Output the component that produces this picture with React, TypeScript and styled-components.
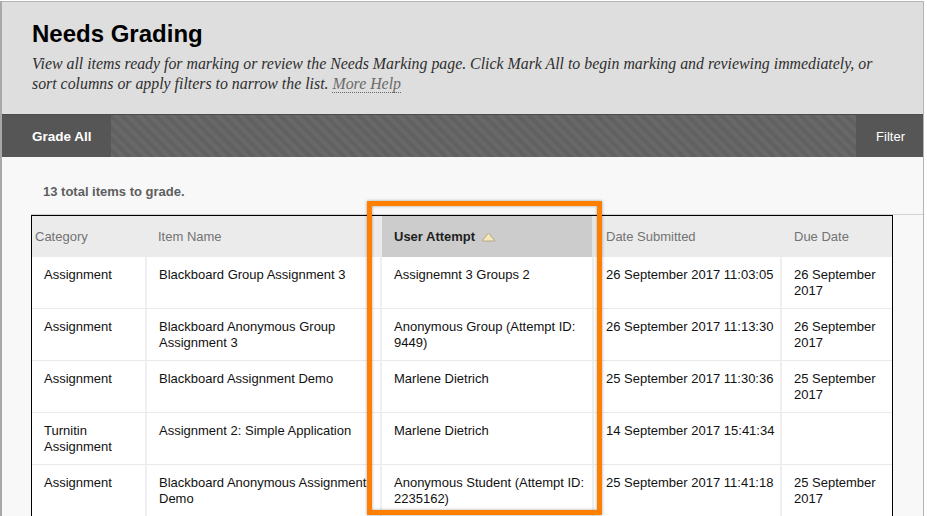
import styled, { createGlobalStyle } from 'styled-components';

const GlobalStyle = createGlobalStyle`
  body {
    margin: 0;
    background: #ffffff;
    font-family: "Liberation Sans", Arial, sans-serif;
  }
`;

const Panel = styled.div`
  width: 924px;
  margin: 1px 0 0 0;
  box-sizing: border-box;
  border: 1px solid #b4b4b4;
  border-bottom: none;
  border-left: 2px solid #a8a8a8;
  height: 515px;
  overflow: hidden;
  background: #f8f8f8;
`;

const PageHeader = styled.header`
  background: #dedede;
  padding: 18px 30px 20px 30px;

  h1 {
    margin: 0;
    font-size: 24px;
    line-height: 28px;
    font-weight: bold;
    color: #000;
  }

  p {
    margin: 6px 0 0;
    font-family: "Liberation Serif", Georgia, serif;
    font-style: italic;
    font-size: 15.85px;
    line-height: 20px;
    color: #2e2e2e;
  }

  a {
    color: #6a6a6a;
    text-decoration: none;
    border-bottom: 1px dotted #6a6a6a;
  }
`;

const Toolbar = styled.nav`
  height: 43px;
  display: flex;
  justify-content: space-between;
  border-top: 1px solid #4c4c4c;
  box-sizing: border-box;
  background: repeating-linear-gradient(
    45deg,
    #616161 0px,
    #616161 4px,
    #686868 4px,
    #686868 8px
  );
`;

const ActionButton = styled.button<{ $bold?: boolean; $left: number; $right: number }>`
  border: none;
  margin: 0;
  background: #565656;
  color: #fff;
  font-family: "Liberation Sans", Arial, sans-serif;
  font-size: ${p => (p.$bold ? '13.5px' : '13px')};
  font-weight: ${p => (p.$bold ? 'bold' : 'normal')};
  padding: 0 ${p => p.$right}px 0 ${p => p.$left}px;
  cursor: pointer;
`;

const Content = styled.section`
  padding: 27px 0 0 29px;
`;

const Summary = styled.p`
  margin: 0 0 14px 12px;
  font-size: 13px;
  line-height: 16px;
  font-weight: bold;
  color: #5e5e5e;
`;

const ListFrame = styled.div`
  position: relative;
  border-top: 1px solid #d2d2d2;
`;

const Grid = styled.div`
  width: 862px;
  box-sizing: border-box;
  border: 1px solid #000;
  border-bottom: none;
  background: #fff;
  display: grid;
  grid-template-columns: 115px 235px 212px 188px 110px;
`;

const HeadCell = styled.div<{ $sorted?: boolean; $pad?: number }>`
  height: 41px;
  display: flex;
  align-items: center;
  gap: 6px;
  padding-left: ${p => p.$pad ?? 12}px;
  background: ${p => (p.$sorted ? '#cccccc' : '#ebebeb')};
  color: ${p => (p.$sorted ? '#1e1e1e' : '#737373')};
  font-weight: ${p => (p.$sorted ? 'bold' : 'normal')};
  font-size: 13px;
  border-right: 2px solid ${p => (p.$sorted ? '#e4e4e4' : '#ebebeb')};
  &:last-child { border-right: none; }
`;

const Cell = styled.div`
  height: 52px;
  box-sizing: border-box;
  padding: 10px 2px 0 12px;
  font-size: 13px;
  line-height: 16px;
  color: #111;
  border-bottom: 1px solid #e9e9e9;
  border-right: 2px solid #efefef;
  &:nth-child(5n) { border-right: none; }
`;

const Highlight = styled.div`
  position: absolute;
  left: 336px;
  top: -14px;
  width: 235px;
  height: 314px;
  box-sizing: border-box;
  border: 5px solid #ff8000;
  box-shadow: 0 0 3px rgba(0, 0, 0, 0.35), inset 0 0 3px rgba(0, 0, 0, 0.35);
  pointer-events: none;
`;

const SortUp = () => (
  <svg width="15" height="10" viewBox="0 0 15 10">
    <polygon points="7.5,1 14,9 1,9" fill="#f6e8bd" stroke="#b9a982" strokeWidth="1" />
  </svg>
);

const rows: string[][] = [
  ['Assignment', 'Blackboard Group Assignment 3', 'Assignemnt 3 Groups 2', '26 September 2017 11:03:05', '26 September 2017'],
  ['Assignment', 'Blackboard Anonymous Group Assignment 3', 'Anonymous Group (Attempt ID: 9449)', '26 September 2017 11:13:30', '26 September 2017'],
  ['Assignment', 'Blackboard Assignment Demo', 'Marlene Dietrich', '25 September 2017 11:30:36', '25 September 2017'],
  ['Turnitin Assignment', 'Assignment 2: Simple Application', 'Marlene Dietrich', '14 September 2017 15:41:34', ''],
  ['Assignment', 'Blackboard Anonymous Assignment Demo', 'Anonymous Student (Attempt ID: 2235162)', '25 September 2017 11:41:18', '25 September 2017'],
];

export default function App() {
  return (
    <>
      <GlobalStyle />
      <Panel>
        <PageHeader>
          <h1>Needs Grading</h1>
          <p>
            View all items ready for marking or review the Needs Marking page. Click Mark All to begin
            marking and reviewing immediately, or sort columns or apply filters to narrow the list.{' '}
            <a href="#">More Help</a>
          </p>
        </PageHeader>
        <Toolbar>
          <ActionButton $bold $left={30} $right={19}>Grade All</ActionButton>
          <ActionButton $left={20} $right={18}>Filter</ActionButton>
        </Toolbar>
        <Content>
          <Summary>13 total items to grade.</Summary>
          <ListFrame>
            <Grid>
              <HeadCell $pad={3}>Category</HeadCell>
              <HeadCell $pad={11}>Item Name</HeadCell>
              <HeadCell $sorted>User Attempt <SortUp /></HeadCell>
              <HeadCell>Date Submitted</HeadCell>
              <HeadCell>Due Date</HeadCell>
              {rows.map((r, i) => r.map((c, j) => <Cell key={`${i}-${j}`}>{c}</Cell>))}
            </Grid>
            <Highlight />
          </ListFrame>
        </Content>
      </Panel>
    </>
  );
}
